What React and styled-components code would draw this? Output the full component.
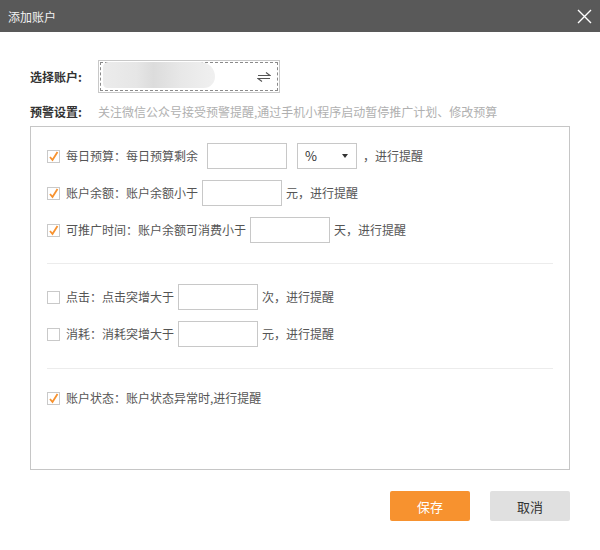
import styled, { createGlobalStyle } from 'styled-components';

const GlobalStyle = createGlobalStyle`
  html, body {
    margin: 0;
    padding: 0;
    background: #fff;
  }
  body {
    font-family: "Noto Sans CJK SC", "Liberation Sans", sans-serif;
    font-size: 12px;
    color: #555;
  }
`;

const Dialog = styled.div`
  width: 600px;
  height: 550px;
  background: #fff;
  display: flex;
  flex-direction: column;
`;

const TitleBar = styled.div`
  height: 32px;
  flex: none;
  background: #595959;
  display: flex;
  align-items: center;
  justify-content: space-between;
  padding: 0 8px 0 8px;
  color: #f2f2f2;
  font-size: 12px;
`;

const CloseButton = styled.button`
  border: 0;
  background: none;
  padding: 0;
  width: 16px;
  height: 16px;
  display: flex;
  align-items: center;
  justify-content: center;
  cursor: pointer;
`;

const Body = styled.div`
  padding: 28px 30px 0 30px;
  display: flex;
  flex-direction: column;
`;

const FieldRow = styled.div`
  display: flex;
  align-items: center;
  height: ${(p) => p.$height || 18}px;
  margin-top: ${(p) => p.$top || 0}px;
`;

const FieldLabel = styled.div`
  width: 68px;
  flex: none;
  font-weight: bold;
  color: #333;
  line-height: 18px;
`;

const Hint = styled.div`
  color: #b0b0b0;
  line-height: 18px;
`;

const AccountPicker = styled.div`
  width: 182px;
  height: 33px;
  box-sizing: border-box;
  border: 1px solid #c8c8c8;
  padding: 1px;
`;

const AccountInner = styled.div`
  height: 100%;
  box-sizing: border-box;
  border: 1px dashed #8a8a8a;
  display: flex;
  align-items: center;
  justify-content: space-between;
  padding: 0 6px 0 2px;
`;

const BlurredName = styled.div`
  width: 112px;
  height: 26px;
  border-radius: 14px 40px 30px 12px;
  background: linear-gradient(90deg, #ececec 0%, #e6e6e6 30%, #dcdcdc 45%, #e8e8e8 70%, #f0f0f0 100%);
  margin-top: -4px;
`;

const Panel = styled.div`
  margin-top: 5px;
  height: 344px;
  box-sizing: border-box;
  border: 1px solid #c6c6c6;
  padding: 0 16px;
  display: flex;
  flex-direction: column;
`;

const Group = styled.div`
  display: flex;
  flex-direction: column;
  gap: 11px;
  padding: ${(p) => p.$pad || '20px 0 21px'};
  border-top: ${(p) => (p.$divided ? '1px solid #ececec' : 'none')};
`;

const Row = styled.div`
  display: flex;
  align-items: center;
  height: ${(p) => (p.$plain ? 18 : 26)}px;
  line-height: 18px;
`;

const Box = styled.span`
  width: 13px;
  height: 13px;
  flex: none;
  box-sizing: border-box;
  border: 1px solid #c9c9c9;
  background: #fff;
  display: flex;
  align-items: center;
  justify-content: center;
  margin-right: 6px;
`;

const Text = styled.span`
  white-space: nowrap;
  margin-left: ${(p) => p.$left || 0}px;
`;

const NumInput = styled.input`
  width: 80px;
  height: 26px;
  box-sizing: border-box;
  border: 1px solid #c8c8c8;
  outline: none;
  padding: 0 6px;
  margin-left: ${(p) => p.$left || 4}px;
  margin-right: 4px;
  font: inherit;
`;

const UnitSelect = styled.div`
  width: 60px;
  height: 26px;
  box-sizing: border-box;
  border: 1px solid #c8c8c8;
  display: flex;
  align-items: center;
  justify-content: space-between;
  padding: 0 8px 0 7px;
  margin-left: 6px;
  color: #333;
  font-size: 13px;
`;

const Caret = styled.span`
  width: 0;
  height: 0;
  border-left: 3px solid transparent;
  border-right: 3px solid transparent;
  border-top: 4px solid #333;
`;

const Footer = styled.div`
  display: flex;
  justify-content: flex-end;
  gap: 20px;
  padding: 21px 30px 0 0;
`;

const Button = styled.button`
  width: 80px;
  height: 30px;
  border: 0;
  border-radius: 2px;
  font-family: inherit;
  font-size: 13px;
  cursor: pointer;
  background: ${(p) => (p.$primary ? '#f7922f' : '#e0e0e0')};
  color: ${(p) => (p.$primary ? '#fff' : '#333')};
`;

const Check = ({ checked }) => (
  <Box>
    {checked && (
      <svg width="11" height="11" viewBox="0 0 11 11">
        <path d="M2 6 L4.5 9 L9.5 1" fill="none" stroke="#f7922f" strokeWidth="1.8" />
      </svg>
    )}
  </Box>
);

const SwapIcon = () => (
  <svg width="14" height="12" viewBox="0 0 14 12">
    <path d="M1 4.5 H13 L9 1.5" fill="none" stroke="#555" strokeWidth="1.1" />
    <path d="M13 7.5 H1 L5 10.5" fill="none" stroke="#555" strokeWidth="1.1" />
  </svg>
);

const topRules = [
  { label: '每日预算：每日预算剩余', select: true, gap: 9 },
  { label: '账户余额：账户余额小于', unit: '元' },
  { label: '可推广时间：账户余额可消费小于', unit: '天' },
];

const spikeRules = [
  { label: '点击：点击突增大于', unit: '次' },
  { label: '消耗：消耗突增大于', unit: '元' },
];

const App = () => {
  return (
    <Dialog>
      <GlobalStyle />
      <TitleBar>
        <span>添加账户</span>
        <CloseButton>
          <svg width="15" height="15" viewBox="0 0 15 15">
            <path d="M1 1 L14 14 M14 1 L1 14" stroke="#fff" strokeWidth="1.4" />
          </svg>
        </CloseButton>
      </TitleBar>
      <Body>
        <FieldRow $height={33}>
          <FieldLabel>选择账户:</FieldLabel>
          <AccountPicker>
            <AccountInner>
              <BlurredName />
              <SwapIcon />
            </AccountInner>
          </AccountPicker>
        </FieldRow>
        <FieldRow $top={10}>
          <FieldLabel>预警设置:</FieldLabel>
          <Hint>关注微信公众号接受预警提醒,通过手机小程序启动暂停推广计划、修改预算</Hint>
        </FieldRow>
        <Panel>
          <Group $pad="16px 0 20px">
            {topRules.map(({ label, select, unit, gap }) => (
              <Row key={label}>
                <Check checked />
                <Text>{label}</Text>
                <NumInput $left={gap} />
                {select ? (
                  <>
                    <UnitSelect>
                      <span>%</span>
                      <Caret />
                    </UnitSelect>
                    <Text $left={6}>，进行提醒</Text>
                  </>
                ) : (
                  <Text>{unit}，进行提醒</Text>
                )}
              </Row>
            ))}
          </Group>
          <Group $divided>
            {spikeRules.map(({ label, unit }) => (
              <Row key={label}>
                <Check />
                <Text>{label}</Text>
                <NumInput />
                <Text>{unit}，进行提醒</Text>
              </Row>
            ))}
          </Group>
          <Group $divided $pad="20px 0">
            <Row $plain>
              <Check checked />
              <Text>账户状态：账户状态异常时,进行提醒</Text>
            </Row>
          </Group>
        </Panel>
      </Body>
      <Footer>
        <Button $primary>保存</Button>
        <Button>取消</Button>
      </Footer>
    </Dialog>
  );
};

export default App;
